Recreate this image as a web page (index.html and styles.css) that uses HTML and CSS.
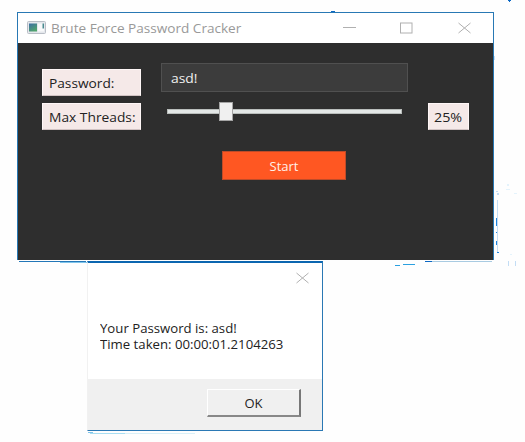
FILE: index.html
```html
<!DOCTYPE html>
<html lang="en">
<head>
<meta charset="utf-8">
<title>Brute Force Password Cracker</title>
<link rel="stylesheet" href="styles.css">
</head>
<body>
<main class="window">
  <header class="titlebar">
    <svg class="app-icon" width="19" height="13" viewBox="0 0 19 13">
      <defs><linearGradient id="pane" x1="0" y1="0" x2="0.6" y2="1"><stop offset="0" stop-color="#3d6ea5"/><stop offset="1" stop-color="#50a46c"/></linearGradient></defs>
      <rect x=".5" y=".5" width="18" height="12" rx="1" fill="#e4e7ec" stroke="#b9bec6"/>
      <rect x="2" y="2.5" width="8" height="8" fill="url(#pane)"/>
      <rect x="11" y="2.5" width="6" height="8" fill="#f8f9fa"/>
      <rect x="15.5" y="2.5" width="1.5" height="5" fill="#4a8b90"/>
    </svg>
    <h1 class="title"><span class="t-title">Brute Force Password Cracker</span></h1>
    <svg class="controls" width="130" height="13" viewBox="0 0 130 13" fill="none" stroke="#b0b0b0">
      <path d="M0 5.5h13"/>
      <rect x="57.5" y="1" width="11.5" height="10"/>
      <path d="M115.5 1l12 10M127.500 1l-12 10"/>
    </svg>
  </header>
  <section class="client">
    <div class="labels">
      <label class="tag" for="pw"><span class="t-password">Password:</span></label>
      <div class="tag"><span class="t-threads">Max Threads:</span></div>
    </div>
    <div class="fields">
      <div class="input" id="pw"><span class="t-value">asd!</span></div>
      <div class="slider"><div class="thumb"></div></div>
      <button class="start"><span class="t-start">Start</span></button>
    </div>
    <div class="tag percent"><span class="t-percent">25%</span></div>
  </section>
</main>
<section class="dialog">
  <svg class="close" width="13" height="12" viewBox="0 0 13 12" fill="none" stroke="#b0b0b0"><path d="M.5 1l12 10M12.5 1l-12 10"/></svg>
  <p class="message"><span class="t-message">Your Password is: asd!<br>Time taken: 00:00:01.2104263</span></p>
  <footer class="footer"><button class="ok"><span class="t-ok">OK</span></button></footer>
</section>
<svg class="specks" width="525" height="442" viewBox="0 0 525 442" shape-rendering="crispEdges">
  <path fill="#0b68c4" d="M331 11h4v1h-4zM508 0h3v1h-3zM509 1h1v1h-1zM425 261h7v1h-7z"/>
  <path fill="#2377b8" d="M19 261h67v1H19z"/>
  <path fill="#7fc4ea" d="M60 262h27v1H60zM88 432h5v1h-5z"/>
  <path fill="#a9def2" d="M90 433h35v1H90z"/>
  <path fill="#d9f0f8" d="M125 433h70v1h-70z"/>
  <path fill="#2ba0e0" d="M395 265h5v1h-5zM403 264h12v1h-12z"/>
  <path fill="#a9cbe2" d="M432 261h60v1h-60z"/>
  <path fill="#c3ddf5" d="M497 200h1v52h-1zM496 191h2v1h-2zM497 193h2v2h-2zM508 261h1v5h-1zM515 261h1v5h-1zM494 56h1v4h-1z"/>
  <path fill="#2185dd" d="M496 218h1v8h-1zM496 232h1v1h-1zM496 241h1v4h-1zM497 252h2v1h-2z"/>
  <path fill="#e4f3fc" d="M506 189h4v1h-4zM507 184h2v2h-2zM514 193h3v1h-3zM510 254h2v1h-2z"/>
</svg>
</body>
</html>
```
FILE: styles.css
```css
* { box-sizing: border-box; }
body {
  margin: 0;
  width: 525px;
  height: 442px;
  padding: 12px 0 0 17px;
  overflow: hidden;
  background: #fefefe;
  color: #222;
  font: 13px/18px "Open Sans", "Noto Sans", sans-serif;
}
span {
  display: inline-block;
  white-space: nowrap;
  transform-origin: 0 50%;
}
.t-title { transform: scaleX(1.045); }
.t-password { transform: scaleX(1.055); }
.t-threads { transform: scaleX(1.06); }
.t-value { transform: scaleX(1.07); }
.t-percent { transform: scaleX(1.1); }
.t-message { transform: scaleX(1.014); }
.window {
  width: 477px;
  height: 248px;
  border: 1px solid #2878b4;
  border-bottom: 0;
  background: #fff;
}
.titlebar {
  display: flex;
  height: 30px;
  padding-left: 9px;
  align-items: center;
}
.app-icon { margin-bottom: 2px; }
.title {
  width: 190px;
  margin: 0 0 0 5px;
  font-size: 13px;
  font-weight: 400;
  color: #999;
}
.controls { margin-left: 102px; }
.client {
  display: flex;
  height: 217px;
  gap: 20px;
  padding-left: 24px;
  background: #2e2e2e;
}
.labels {
  display: flex;
  flex-direction: column;
  width: 99px;
  gap: 7px;
  padding-top: 26px;
}
.tag {
  height: 27px;
  padding: 4px 0 0 6px;
  border: 1px solid #fff7f7;
  border-bottom-color: #d0c2c2;
  background: #f5e9e8;
}
.percent { width: 41px; margin-top: 60px; padding-left: 5px; }
.fields { width: 247px; padding-top: 20px; }
.input {
  height: 29px;
  padding: 5px 0 0 9px;
  border: 1px solid #505050;
  background: #3c3c3c;
  color: #f0f0f0;
}
.slider {
  width: 235px;
  height: 5px;
  margin: 17px 0 0 6px;
  border: 1px solid #b9bdbb;
  background: #e3e7e6;
}
.thumb {
  width: 14px;
  height: 19px;
  margin: -8px 0 0 51px;
  position: relative;
  border: 1px solid #a5a5a5;
  background: #f0f0f0;
}
.start {
  display: block;
  width: 124px;
  height: 29px;
  margin: 37px 0 0 61px;
  padding: 0;
  border: 1px solid #bf4b28;
  background: #ff5722;
  color: #fff0e8;
  font: inherit;
}
.dialog {
  width: 236px;
  height: 170px;
  margin: 1px 0 0 70px;
  border: 1px solid #2a78b4;
  border-top: 2px solid #0b66b0;
  border-left-color: #f1f1f1;
  background: #fff;
}
.close { display: block; margin: 9px 0 0 208px; }
.message {
  height: 95px;
  margin: 0;
  padding: 36px 0 0 12px;
  line-height: 16px;
}
.footer { height: 51px; padding: 10px 0 0 119px; background: #f0f0f0; }
.ok {
  display: block;
  width: 94px;
  height: 28px;
  padding: 0;
  border: 1px solid #fff;
  border-right: 2px solid #777;
  border-bottom: 2px solid #888;
  background: #f0f0f0;
  color: #222;
  font: inherit;
}
.specks { position: absolute; top: 0; left: 0; pointer-events: none; }
```
